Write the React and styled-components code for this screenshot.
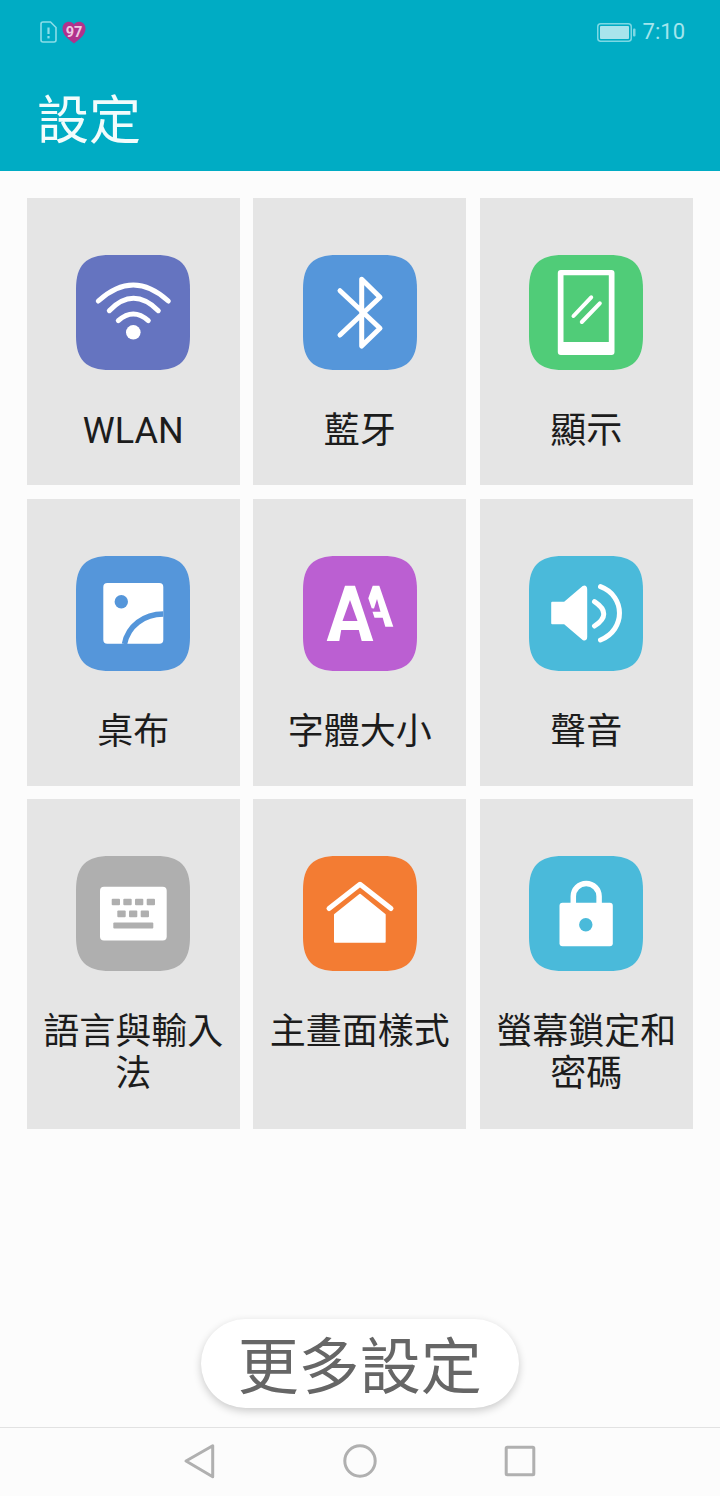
import styled, { createGlobalStyle } from 'styled-components';

const GlobalStyle = createGlobalStyle`
  html, body {
    margin: 0;
    padding: 0;
    background: #fcfcfc;
  }
  * {
    box-sizing: border-box;
  }
`;

const FONT = `Roboto, "Noto Sans CJK TC", sans-serif`;

const Page = styled.div`
  width: 720px;
  height: 1496px;
  display: flex;
  flex-direction: column;
  font-family: ${FONT};
  background: #fcfcfc;
`;

const Header = styled.header`
  height: 171px;
  background: #00acc4;
  padding: 21px 35px 0 40px;
`;

const StatusBar = styled.div`
  height: 22px;
  display: flex;
  align-items: center;
`;

const StatusLeft = styled.div`
  display: flex;
  align-items: center;
  gap: 5px;
`;

const StatusRight = styled.div`
  margin-left: auto;
  display: flex;
  align-items: center;
  gap: 7px;
`;

const Clock = styled.span`
  font-size: 22px;
  line-height: 22px;
  color: #a3e5ed;
`;

const Title = styled.h1`
  margin: 49px 0 0 -3px;
  font-size: 52px;
  line-height: 60px;
  font-weight: 400;
  color: #f2fcfc;
`;

const Content = styled.main`
  flex: 1;
  display: flex;
  flex-direction: column;
  padding: 27px 27px 19px 26.5px;
`;

const Grid = styled.div`
  display: grid;
  grid-template-columns: repeat(3, 1fr);
  gap: 13.5px 13.2px;
`;

const Cell = styled.div`
  background: #e5e5e5;
  display: flex;
  flex-direction: column;
  align-items: center;
  padding: 57px 12px ${(p) => (p.$tall ? '34px' : '33px')};
`;

const Tile = styled.svg`
  width: 114px;
  height: 115px;
  display: block;
  flex: none;
`;

const Label = styled.div`
  margin-top: 40px;
  font-size: 36px;
  line-height: 42px;
  color: #1c1c1c;
  text-align: center;
  min-height: ${(p) => (p.$tall ? '84px' : '42px')};
`;

const MoreButton = styled.button`
  margin: auto auto 0;
  width: 318px;
  height: 89px;
  border: none;
  border-radius: 45px;
  background: #fff;
  box-shadow: 0 3px 8px rgba(0, 0, 0, 0.2);
  font-family: ${FONT};
  font-size: 61px;
  line-height: 81px;
  color: #666;
  padding: 9px 0 0;
`;

const NavBar = styled.nav`
  height: 69px;
  border-top: 1px solid #e2e2e2;
  display: flex;
  justify-content: center;
  align-items: center;
  gap: 124px;
  padding-bottom: 2px;
`;

const NavIcon = styled.svg`
  width: 36px;
  height: 36px;
  display: block;
  fill: none;
  stroke: #b0b0b0;
  stroke-width: 3;
  stroke-linejoin: round;
`;

// rounded-square app icon shape, sides flatter than a plain border-radius
const SQUIRCLE =
  'M34 0H80C104 0 114 10 114 34V81C114 105 104 115 80 115H34C10 115 0 105 0 81V34C0 10 10 0 34 0Z';

const IconTile = ({ color, children }) => (
  <Tile viewBox="0 0 114 115">
    <path d={SQUIRCLE} fill={color} />
    {children}
  </Tile>
);

const line = { fill: 'none', stroke: '#fff', strokeLinecap: 'round', strokeLinejoin: 'round' };

const WifiIcon = () => (
  <IconTile color="#6574c0">
    <g {...line} strokeWidth="5">
      <path d="M22.3 46Q57.3 14 92.3 46" />
      <path d="M33.3 55.7Q57.3 31 82.3 55.7" />
      <path d="M42.3 65.7Q57.3 52.3 72.3 65.7" />
    </g>
    <circle cx="57.3" cy="77.3" r="7.3" fill="#fff" />
  </IconTile>
);

const BluetoothIcon = () => (
  <IconTile color="#5596da">
    <path {...line} strokeWidth="5" d="M37 35.7L77 73.3L58.7 91V24.3L77 42.3L37 80" />
  </IconTile>
);

const DisplayIcon = () => (
  <IconTile color="#50cc78">
    <path
      fill="#fff"
      fillRule="evenodd"
      d="M31.8 15H82.5Q85.5 15 85.5 18V97Q85.5 100 82.5 100H31.8Q28.8 100 28.8 97V18Q28.8 15 31.8 15ZM34.5 20.3V87H79.8V20.3Z"
    />
    <path {...line} strokeWidth="4" d="M62.2 42.3L44.5 61M70.8 48.3L52.8 67" />
  </IconTile>
);

const WallpaperIcon = () => (
  <IconTile color="#5596da">
    <rect x="27.3" y="27" width="60" height="60.7" rx="4" fill="#fff" />
    <circle cx="45.3" cy="45.7" r="6.7" fill="#5596da" />
    <path d="M48.5 88C52 70 68 58 87.3 58" fill="none" stroke="#5596da" strokeWidth="5.5" />
  </IconTile>
);

const FontSizeIcon = () => (
  <IconTile color="#bb5fd2">
    <path
      fill="#fff"
      fillRule="evenodd"
      d="M42 29.7H52L70.3 85H58.7L55.8 74H38.2L36.3 85H23.7ZM47 44L39.5 65H54.5Z"
    />
    <path
      fill="#fff"
      d="M69.7 29.7H76.3L90.3 70.7H82.3L79.7 61.7H71.5L69.5 55.7H77.5L74 43L71 52.5L68.7 52.3L65.3 42.3Z"
    />
  </IconTile>
);

const SoundIcon = () => (
  <IconTile color="#4abada">
    <path
      fill="#fff"
      stroke="#fff"
      strokeWidth="2"
      strokeLinejoin="round"
      d="M23.2 46.7H35.5L54 31Q57.2 29.5 57.2 33V81Q57.2 84.5 54 83L35.5 67.3H23.2Z"
    />
    <g {...line} strokeWidth="5">
      <path d="M65.5 45.7Q84 58 65.5 70" />
      <path d="M71.5 30.7C96.8 40 96.8 74 71.5 84" />
    </g>
  </IconTile>
);

const KeyboardIcon = () => (
  <IconTile color="#afafaf">
    <rect x="24" y="30.8" width="66.7" height="53.7" rx="4" fill="#fff" />
    <g fill="#afafaf">
      <rect x="35.7" y="42.8" width="8.3" height="6.4" rx="1" />
      <rect x="47.3" y="42.8" width="8.4" height="6.4" rx="1" />
      <rect x="59" y="42.8" width="8.3" height="6.4" rx="1" />
      <rect x="70.7" y="42.8" width="8.3" height="6.4" rx="1" />
      <rect x="41.3" y="54.5" width="8.4" height="6.7" rx="1" />
      <rect x="53" y="54.5" width="8.3" height="6.7" rx="1" />
      <rect x="64.7" y="54.5" width="8.3" height="6.7" rx="1" />
      <rect x="37.3" y="66.5" width="40" height="6" rx="1" />
    </g>
  </IconTile>
);

const HomeIcon = () => (
  <IconTile color="#f37c33">
    <path {...line} strokeWidth="5" d="M26 52.5L57 28.3L88 52.5" />
    <path
      fill="#fff"
      stroke="#fff"
      strokeWidth="2"
      strokeLinejoin="round"
      d="M57 38.8L32 58.8V85.8H81.7V58.8Z"
    />
  </IconTile>
);

const LockIcon = () => (
  <IconTile color="#4abada">
    <path d="M44.3 48V40.3a12.9 12.9 0 0 1 25.8 0V48" fill="none" stroke="#fff" strokeWidth="5.5" />
    <rect x="30.5" y="46.8" width="53.3" height="43.4" rx="3" fill="#fff" />
    <circle cx="56.8" cy="68.8" r="6.7" fill="#4abada" />
  </IconTile>
);

const SETTINGS = [
  { label: 'WLAN', Icon: WifiIcon },
  { label: '藍牙', Icon: BluetoothIcon },
  { label: '顯示', Icon: DisplayIcon },
  { label: '桌布', Icon: WallpaperIcon },
  { label: '字體大小', Icon: FontSizeIcon },
  { label: '聲音', Icon: SoundIcon },
  { label: '語言與輸入法', Icon: KeyboardIcon, tall: true },
  { label: '主畫面樣式', Icon: HomeIcon, tall: true },
  { label: '螢幕鎖定和密碼', Icon: LockIcon, tall: true },
];

const App = () => (
  <Page>
    <GlobalStyle />
    <Header>
      <StatusBar>
        <StatusLeft>
          <svg width="17" height="22" viewBox="0 0 17 22" fill="none">
            <path
              d="M3 1H10.5L16 6.5V19Q16 21 14 21H3Q1 21 1 19V3Q1 1 3 1Z"
              stroke="#8adde8"
              strokeWidth="1.6"
            />
            <path d="M8.5 6.5V13" stroke="#8adde8" strokeWidth="2.2" />
            <path d="M8.5 15V17.4" stroke="#8adde8" strokeWidth="2.2" />
          </svg>
          <svg width="24" height="23" viewBox="0 0 24 23">
            <path
              d="M12 22.5C5 17 .5 13.5.5 7.5C.5 3.5 3.5 .8 7 .8C9 .8 11 1.8 12 3.5C13 1.8 15 .8 17 .8C20.5 .8 23.5 3.5 23.5 7.5C23.5 13.5 19 17 12 22.5Z"
              fill="#b1328c"
            />
            <text
              x="12"
              y="15.5"
              textAnchor="middle"
              fontFamily="Roboto, sans-serif"
              fontWeight="700"
              fontSize="14.5"
              fill="#eecbe2"
            >
              97
            </text>
          </svg>
        </StatusLeft>
        <StatusRight>
          <svg width="39" height="19" viewBox="0 0 39 19">
            <rect x=".75" y=".75" width="33.5" height="17.5" rx="3" fill="none" stroke="#7dd8e4" strokeWidth="1.5" />
            <rect x="3" y="3" width="29" height="13" rx="1" fill="#a8e4ec" />
            <rect x="36" y="5.5" width="2.5" height="8" rx="1" fill="#7dd8e4" />
          </svg>
          <Clock>7:10</Clock>
        </StatusRight>
      </StatusBar>
      <Title>設定</Title>
    </Header>
    <Content>
      <Grid>
        {SETTINGS.map(({ label, Icon, tall }) => (
          <Cell key={label} $tall={tall}>
            <Icon />
            <Label $tall={tall}>{label}</Label>
          </Cell>
        ))}
      </Grid>
      <MoreButton>更多設定</MoreButton>
    </Content>
    <NavBar>
      <NavIcon viewBox="0 0 36 36">
        <path d="M4 18L30.7 2.7V33.7Z" />
      </NavIcon>
      <NavIcon viewBox="0 0 36 36">
        <circle cx="18" cy="18" r="15.2" />
      </NavIcon>
      <NavIcon viewBox="0 0 36 36">
        <rect x="4.2" y="4.2" width="27.6" height="27.6" rx="1" />
      </NavIcon>
    </NavBar>
  </Page>
);

export default App;
